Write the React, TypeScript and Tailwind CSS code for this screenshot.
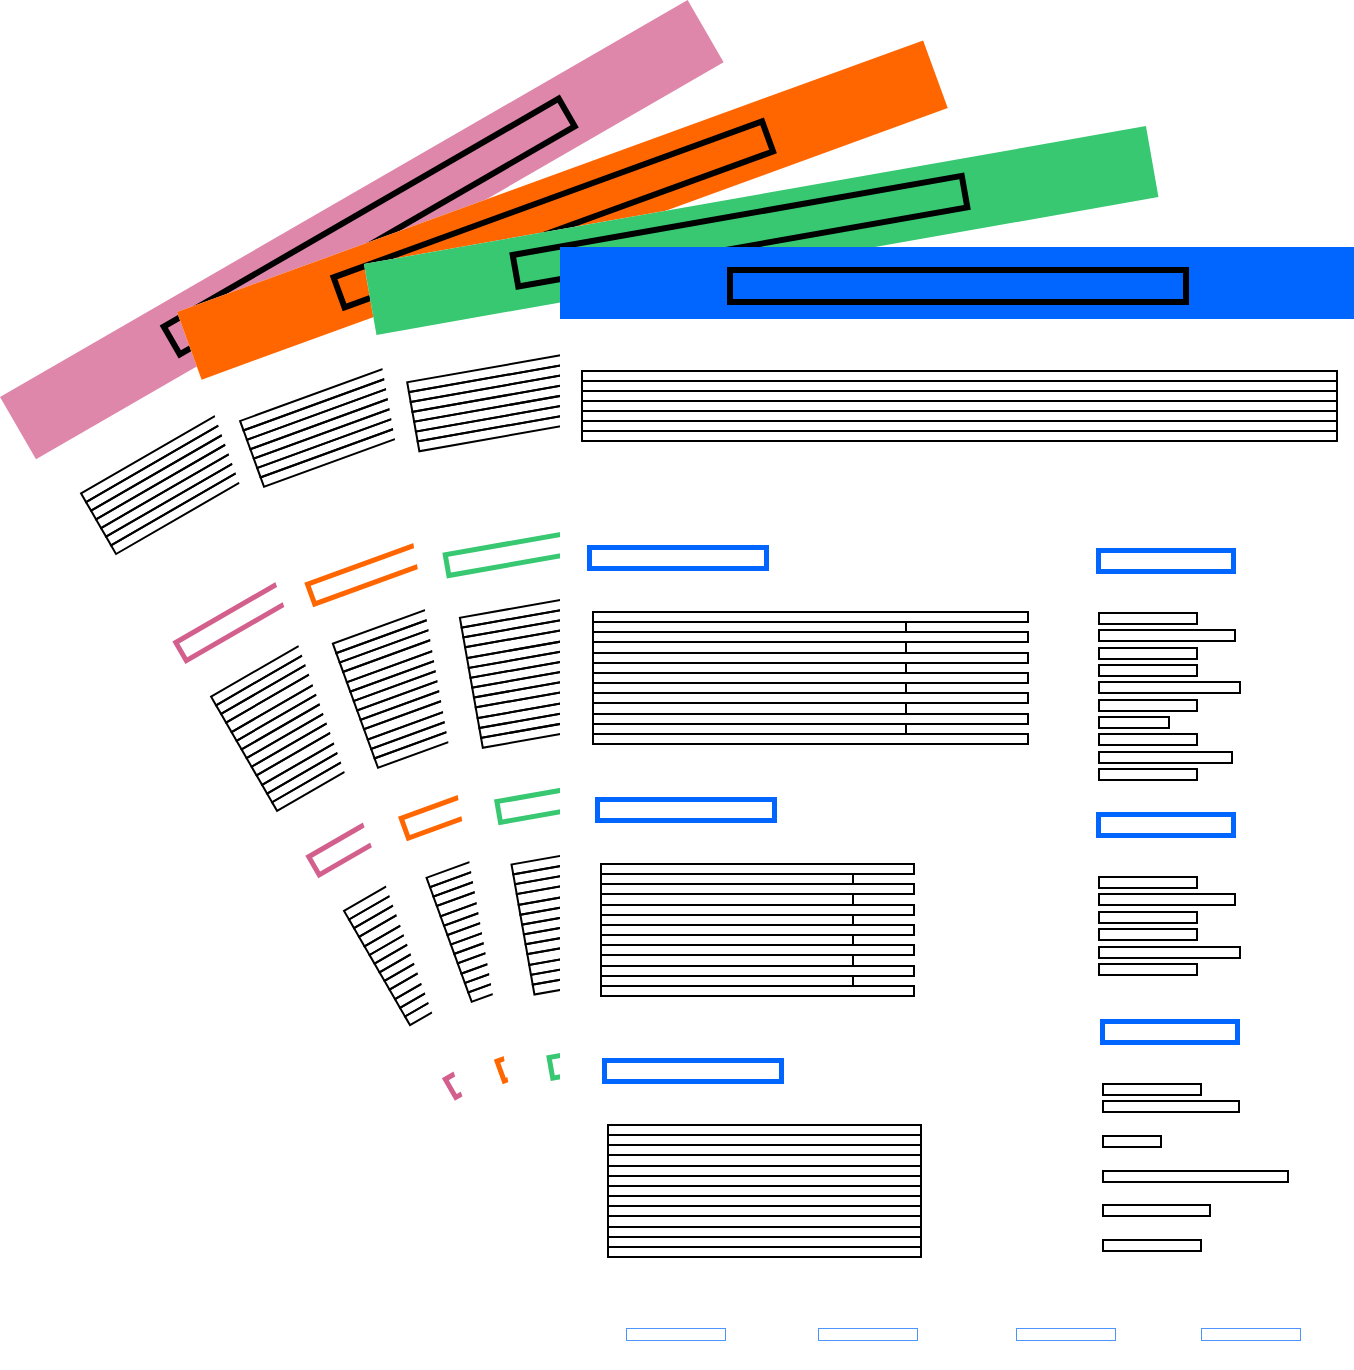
import clsx from "clsx";

type Theme = {
  band: string;
  heading: string;
  title: string;
};

const PINK: Theme = {
  band: "bg-[#de87aa]",
  heading: "border-[#d35f8d]",
  title: "ml-[174px] mt-[18px]",
};
const ORANGE: Theme = {
  band: "bg-[#ff6600]",
  heading: "border-[#ff6600]",
  title: "ml-[156px] mt-[18px]",
};
const GREEN: Theme = {
  band: "bg-[#37c871]",
  heading: "border-[#37c871]",
  title: "ml-[145px] mt-[14px]",
};
const BLUE: Theme = {
  band: "bg-[#0066ff]",
  heading: "border-[#0066ff]",
  title: "ml-[167px] mt-[20px]",
};

/** Stacked text lines whose outlines share their edges; odd lines may be shorter. */
function Lines({
  count,
  className,
  short = "w-full",
}: {
  count: number;
  className: string;
  short?: string;
}) {
  return (
    <div className={clsx("flex flex-col", className)}>
      {Array.from({ length: count }, (_, i) => (
        <div
          key={i}
          className={clsx(
            "flex-1 border-2 border-black",
            i > 0 && "-mt-[2px]",
            i % 2 ? short : "w-full",
          )}
        />
      ))}
    </div>
  );
}

/** Separate entries of a side list; null leaves a blank line. */
function Entries({ widths, className }: { widths: (string | null)[]; className: string }) {
  return (
    <div className={clsx("ml-[2px] mt-[38px] flex flex-col justify-between", className)}>
      {widths.map((width, i) => (
        <div key={i} className={clsx("h-[13px]", width && "border-2 border-black", width)} />
      ))}
    </div>
  );
}

function Heading({ theme, width }: { theme: Theme; width: string }) {
  return <div className={clsx("h-[26px] border-[5px]", width, theme.heading)} />;
}

const S = "w-[100px]";
const M = "w-[138px]";
const L = "w-[143px]";

function Sheet({ theme, className }: { theme: Theme; className: string }) {
  return (
    <article className={clsx("bg-white pb-[29px]", className)}>
      <header className={clsx("flex h-[72px] items-start", theme.band)}>
        <div className={clsx("h-[38px] w-[462px] border-[6px] border-black", theme.title)} />
      </header>

      <Lines count={7} className="ml-[21px] mr-[16px] mt-[51px] h-[72px]" />

      <div className="flex items-start justify-between">
        <main className="pt-[103px]">
          <section className="pl-[27px]">
            <Heading theme={theme} width="w-[182px]" />
            <Lines count={13} className="ml-[5px] mt-[40px] h-[134px] w-[437px]" short="w-[315px]" />
          </section>
          <section className="pl-[35px] pt-[52px]">
            <Heading theme={theme} width="w-[182px]" />
            <Lines count={13} className="ml-[5px] mt-[40px] h-[134px] w-[315px]" short="w-[254px]" />
          </section>
          <section className="pl-[42px] pt-[61px]">
            <Heading theme={theme} width="w-[182px]" />
            <Lines count={13} className="ml-[5px] mt-[40px] h-[134px] w-[315px]" />
          </section>
        </main>

        <aside className="w-[258px] pt-[106px]">
          <section>
            <Heading theme={theme} width="w-[140px]" />
            <Entries
              className="h-[169px]"
              widths={[S, M, S, S, L, S, "w-[72px]", S, "w-[135px]", S]}
            />
          </section>
          <section className="pt-[31px]">
            <Heading theme={theme} width="w-[140px]" />
            <Entries className="h-[100px]" widths={[S, M, S, S, L, S]} />
          </section>
          <section className="pl-[4px] pt-[43px]">
            <Heading theme={theme} width="w-[140px]" />
            <Entries
              className="h-[169px]"
              widths={[S, M, null, "w-[60px]", null, "w-[187px]", null, "w-[109px]", null, S]}
            />
          </section>
        </aside>
      </div>

      <footer className="flex pl-[66px] pt-[70px]">
        <div className="h-[13px] w-[100px] border border-[#4d94ff]" />
        <div className="ml-[92px] h-[13px] w-[100px] border border-[#4d94ff]" />
        <div className="ml-[98px] h-[13px] w-[100px] border border-[#4d94ff]" />
        <div className="ml-[85px] h-[13px] w-[100px] border border-[#4d94ff]" />
      </footer>
    </article>
  );
}

export default function App() {
  return (
    <div className="relative overflow-hidden bg-white pt-[247px]">
      <Sheet
        theme={PINK}
        className="absolute left-0 top-[397px] w-[794px] origin-top-left -rotate-30"
      />
      <Sheet
        theme={ORANGE}
        className="absolute left-[177px] top-[312px] w-[794px] origin-top-left -rotate-20"
      />
      <Sheet
        theme={GREEN}
        className="absolute left-[364px] top-[264px] w-[794px] origin-top-left -rotate-10"
      />
      <Sheet theme={BLUE} className="relative ml-[560px]" />
    </div>
  );
}
